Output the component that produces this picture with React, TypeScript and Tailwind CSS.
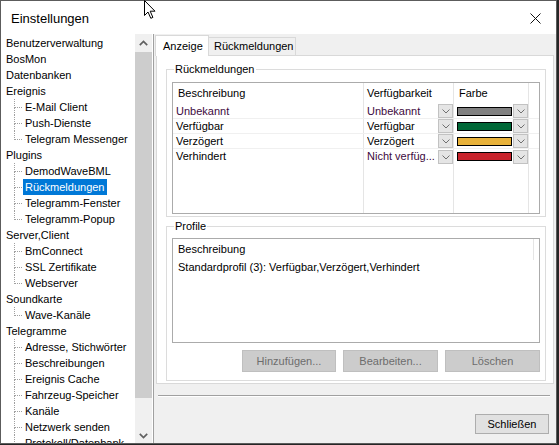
import React from "react";

type Item = { label: string; child?: boolean; last?: boolean; selected?: boolean };

const items: Item[] = [
  { label: "Benutzerverwaltung" },
  { label: "BosMon" },
  { label: "Datenbanken" },
  { label: "Ereignis" },
  { label: "E-Mail Client", child: true },
  { label: "Push-Dienste", child: true },
  { label: "Telegram Messenger", child: true, last: true },
  { label: "Plugins" },
  { label: "DemodWaveBML", child: true },
  { label: "Rückmeldungen", child: true, selected: true },
  { label: "Telegramm-Fenster", child: true },
  { label: "Telegramm-Popup", child: true, last: true },
  { label: "Server,Client" },
  { label: "BmConnect", child: true },
  { label: "SSL Zertifikate", child: true },
  { label: "Webserver", child: true, last: true },
  { label: "Soundkarte" },
  { label: "Wave-Kanäle", child: true, last: true },
  { label: "Telegramme" },
  { label: "Adresse, Stichwörter", child: true },
  { label: "Beschreibungen", child: true },
  { label: "Ereignis Cache", child: true },
  { label: "Fahrzeug-Speicher", child: true },
  { label: "Kanäle", child: true },
  { label: "Netzwerk senden", child: true },
  { label: "Protokoll/Datenbank", child: true },
];

function TreeRow({ it }: { it: Item }) {
  if (!it.child)
    return <div className="h-[16px] leading-[16px] pl-[5px] whitespace-nowrap">{it.label}</div>;
  return (
    <div className="h-[16px] flex whitespace-nowrap">
      <div className="w-[13px] shrink-0" />
      <div className="w-[8px] shrink-0 flex flex-col">
        <div className="h-[9px] border-l border-b border-dotted border-[#a0a0a0]" />
        <div className={it.last ? "h-[7px]" : "h-[7px] border-l border-dotted border-[#a0a0a0]"} />
      </div>
      <div
        className={
          it.selected
            ? "ml-[1px] h-[16px] leading-[16px] px-[2px] bg-[#0078d7] text-white"
            : "ml-[1px] h-[16px] leading-[16px] px-[2px]"
        }
      >
        {it.label}
      </div>
    </div>
  );
}

function ScrollChevron({ down }: { down?: boolean }) {
  return (
    <svg width="9" height="6" viewBox="0 0 9 6">
      <polyline
        points={down ? "0.8,0.8 4.5,4.5 8.2,0.8" : "0.8,5.2 4.5,1.5 8.2,5.2"}
        fill="none"
        stroke="#606060"
        strokeWidth="1.7"
      />
    </svg>
  );
}

function DropBtn() {
  return (
    <div className="w-[15px] h-[14px] shrink-0 bg-[#e5e5e5] border border-[#c2c2c2] flex items-end justify-center pb-[3px]">
      <svg width="8" height="5" viewBox="0 0 8 5">
        <polyline points="0.5,0.5 4,4 7.5,0.5" fill="none" stroke="#707070" strokeWidth="1" />
      </svg>
    </div>
  );
}

type Row = { name: string; avail: string; color: string; purple?: boolean; purpleName?: boolean };
const rows: Row[] = [
  { name: "Unbekannt", avail: "Unbekannt", color: "#808080", purple: true, purpleName: true },
  { name: "Verfügbar", avail: "Verfügbar", color: "#006838" },
  { name: "Verzögert", avail: "Verzögert", color: "#e8b23a" },
  { name: "Verhindert", avail: "Nicht verfüg...", color: "#c8232c", purple: true },
];

function Colors() {
  return (
    <div className="h-[132px] border border-[#ababab] bg-white flex flex-col">
      <div className="h-[21px] flex shrink-0">
        <div className="w-[191px] border-r border-[#e5e5e5] pl-[5px] flex items-center">Beschreibung</div>
        <div className="w-[90px] border-r border-[#e5e5e5] pl-[3px] flex items-center">Verfügbarkeit</div>
        <div className="w-[75px] border-r border-[#e5e5e5] pl-[5px] flex items-center">Farbe</div>
        <div className="flex-1" />
      </div>
      {rows.map((r, i) => (
        <div
          key={r.name}
          className={i < 3 ? "h-[15px] flex shrink-0 border-b border-[#f0f0f0]" : "h-[15px] flex shrink-0"}
        >
          <div
            className={
              r.purpleName
                ? "w-[191px] border-r border-[#e5e5e5] pl-[3px] flex items-center text-[#3d0a40]"
                : "w-[191px] border-r border-[#e5e5e5] pl-[3px] flex items-center"
            }
          >
            {r.name}
          </div>
          <div className="w-[90px] border-r border-[#e5e5e5] pl-[3px] flex items-center">
            <span className={r.purple ? "flex-1 whitespace-nowrap overflow-hidden text-[#3d0a40]" : "flex-1 whitespace-nowrap overflow-hidden"}>
              {r.avail}
            </span>
            <DropBtn />
          </div>
          <div className="w-[75px] border-r border-[#e5e5e5] pl-[3px] flex items-center">
            <div className="w-[55px] h-[9px] border border-black" style={{ backgroundColor: r.color }} />
            <div className="w-[1px]" />
            <DropBtn />
          </div>
          <div className="flex-1" />
        </div>
      ))}
      <div className="flex-1 flex">
        <div className="w-[191px] border-r border-[#e5e5e5]" />
        <div className="w-[90px] border-r border-[#e5e5e5]" />
        <div className="w-[75px] border-r border-[#e5e5e5]" />
        <div className="flex-1" />
      </div>
    </div>
  );
}

function Profiles() {
  return (
    <div className="h-[105px] border border-[#ababab] bg-white flex flex-col">
      <div className="h-[21px] flex shrink-0">
        <div className="w-[361px] border-r border-[#e5e5e5] pl-[5px] flex items-center">Beschreibung</div>
        <div className="flex-1" />
      </div>
      <div className="h-[15px] pl-[5px] flex items-center whitespace-nowrap">
        Standardprofil (3): Verfügbar,Verzögert,Verhindert
      </div>
    </div>
  );
}

function DisabledBtn({ label, w }: { label: string; w: string }) {
  return (
    <div className={`${w} h-[22px] bg-[#cccccc] border border-[#bfbfbf] text-[#6d6d6d] flex items-center justify-center`}>
      {label}
    </div>
  );
}

export default function App() {
  return (
    <div className="w-[559px] h-[445px] bg-[#262626] relative overflow-hidden font-['Liberation_Sans',Arial,sans-serif] text-[11px] text-black">
      <div className="w-[557px] h-[444px] border border-[#5c5c5c] bg-[#f0f0f0] flex flex-col">
        {/* title bar */}
        <div className="h-[33px] shrink-0 bg-white flex items-center justify-between pl-[10px] pr-[15px]">
          <span className="text-[13px] pt-[2px]">Einstellungen</span>
          <svg width="11" height="11" viewBox="0 0 11 11" className="mt-[1px]">
            <line x1="0.5" y1="0.5" x2="10.5" y2="10.5" stroke="#111" strokeWidth="1" />
            <line x1="10.5" y1="0.5" x2="0.5" y2="10.5" stroke="#111" strokeWidth="1" />
          </svg>
        </div>
        {/* body */}
        <div className="flex-1 min-h-0 flex">
          {/* tree */}
          <div className="w-[134px] shrink-0 bg-white pt-[1px] overflow-hidden">
            {items.map((it) => (
              <TreeRow key={it.label} it={it} />
            ))}
          </div>
          {/* scrollbar */}
          <div className="w-[17px] shrink-0 bg-[#f0f0f0] flex flex-col">
            <div className="h-[18px] flex items-center justify-center">
              <ScrollChevron />
            </div>
            <div className="h-[346px] bg-[#cdcdcd]" />
            <div className="flex-1" />
            <div className="h-[17px] flex items-center justify-center pt-[2px]">
              <ScrollChevron down />
            </div>
          </div>
          <div className="w-px bg-white" />
          <div className="w-px bg-[#a0a0a0]" />
          {/* right panel */}
          <div className="flex-1 min-w-0 flex flex-col pt-[1px]">
            {/* tabs */}
            <div className="h-[20px] flex items-end pl-[1px] shrink-0">
              <div className="relative z-10 w-[54px] h-[21px] -mb-px bg-white border-t border-l border-r border-[#d9d9d9] pl-[7px] flex items-center">
                Anzeige
              </div>
              <div className="w-[87px] h-[18px] bg-[#f0f0f0] border-t border-r border-[#d9d9d9] pl-[5px] flex items-center">
                Rückmeldungen
              </div>
            </div>
            {/* tab page */}
            <div className="ml-[2px] w-[398px] h-[329px] shrink-0 bg-white border border-[#d9d9d9] pl-[9px] pr-[7px] pt-[6px] pb-[2px] flex flex-col">
              <fieldset className="border border-[#dcdcdc] px-[5px] pb-[2px] m-0">
                <legend className="ml-[2px] px-[1px] leading-[14px]">Rückmeldungen</legend>
                <div className="mt-[6px]">
                  <Colors />
                </div>
              </fieldset>
              <fieldset className="mt-[2px] border border-[#dcdcdc] px-[5px] pb-[8px] m-0">
                <legend className="ml-[2px] px-[1px] leading-[14px]">Profile</legend>
                <div className="mt-[5px]">
                  <Profiles />
                </div>
                <div className="mt-[7px] flex justify-end gap-[7px]">
                  <DisabledBtn label="Hinzufügen..." w="w-[94px]" />
                  <DisabledBtn label="Bearbeiten..." w="w-[95px]" />
                  <DisabledBtn label="Löschen" w="w-[95px]" />
                </div>
              </fieldset>
            </div>
            {/* separator */}
            <div className="mt-[11px] ml-[4px] w-[392px] h-px bg-[#a0a0a0] shrink-0" />
            <div className="ml-[4px] w-[392px] h-px bg-white shrink-0" />
            {/* footer */}
            <div className="mt-[17px] flex justify-end pr-[7px]">
              <div className="w-[74px] h-[20px] bg-[#e1e1e1] border border-[#adadad] flex items-center justify-center">
                Schließen
              </div>
            </div>
          </div>
        </div>
      </div>
      {/* mouse cursor */}
      <svg width="13" height="20" viewBox="0 0 13 20" className="absolute left-[144px] top-[0px]">
        <path d="M0.5,0.5 L0.5,15.5 L4,12 L6.8,18.3 L8.9,17.4 L6.2,11.2 L11,11.2 Z" fill="white" stroke="black" strokeWidth="1" />
      </svg>
    </div>
  );
}
